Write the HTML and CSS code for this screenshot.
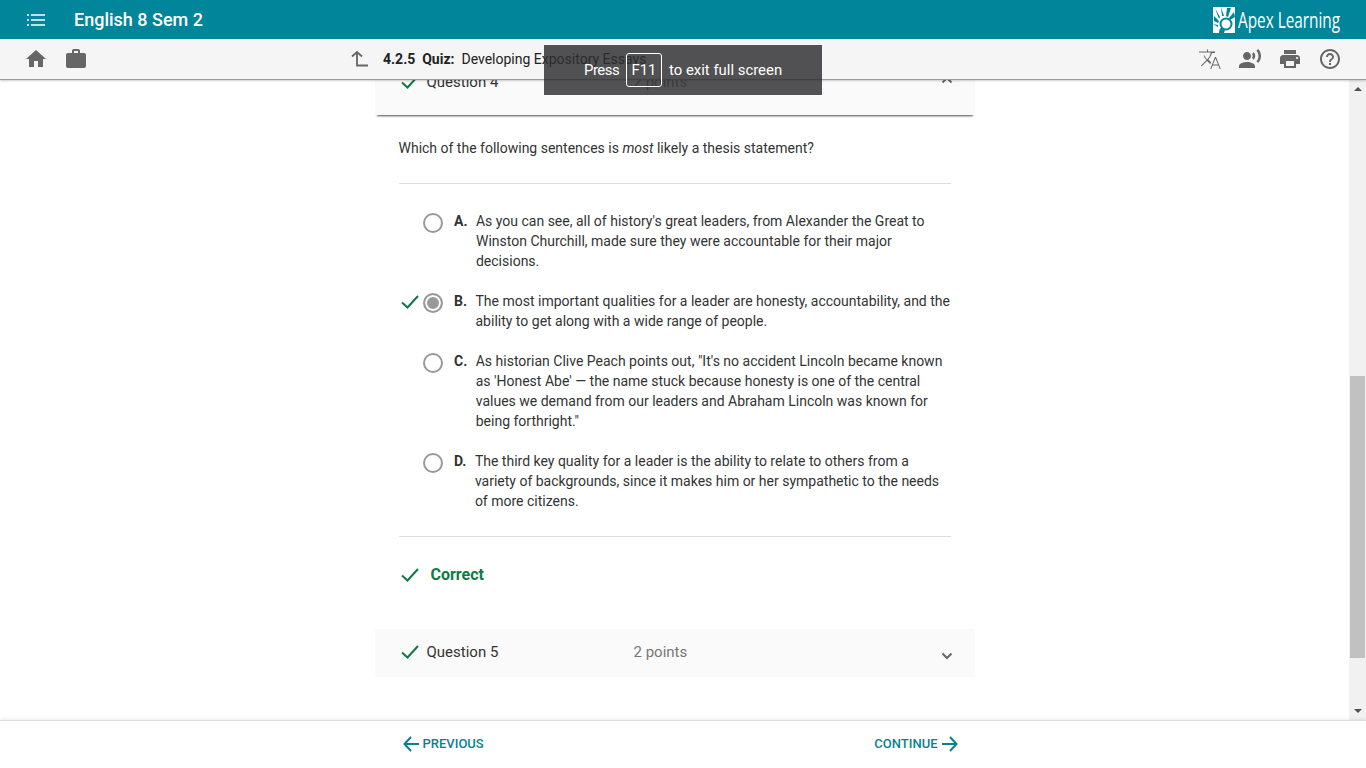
FILE: index.html
```html
<!DOCTYPE html>
<html lang="en">
<head>
<meta charset="utf-8">
<title>English 8 Sem 2</title>
<link rel="stylesheet" href="styles.css">
</head>
<body>
<div class="app">
  <header class="topbar">
    <svg class="menu-icon" viewBox="0 0 20 14" width="20" height="14"><path d="M1 2h2M5 2h14M1 7h2M5 7h14M1 12h2M5 12h14" stroke="#fff" stroke-width="1.700" fill="none"/></svg>
    <h1 class="course">English 8 Sem 2</h1>
    <div class="logo">
      <svg class="logo-mark" viewBox="0 0 22 26" width="22" height="26">
        <rect width="22" height="26" fill="#fff"/>
        <path d="M2 1l5 9-1 2zM8 0l3 9h-2zM14 1l-1 8 2 1 3-9zM21 5l-5 6 1 2 5-3zM1 9l5 5-1 2-4-2zM0 17l5 1v2z" fill="#00859b"/>
        <circle cx="13" cy="17" r="5.500" fill="none" stroke="#00859b" stroke-width="2"/>
        <path d="M6 26c0-3 1-5 3-6l3 3-1 3z" fill="#00859b"/>
      </svg>
      <span class="logo-text">Apex Learning</span>
    </div>
  </header>

  <nav class="toolbar">
    <div class="tool-left">
      <svg class="icon" viewBox="0 0 24 24"><path d="M10 20v-6h4v6h5v-8h3L12 3 2 12h3v8z"/></svg>
      <svg class="icon" viewBox="0 0 24 24"><path d="M20 6h-4V4c0-1.110-.89-2-2-2h-4c-1.110 0-2 .89-2 2v2H4c-1.110 0-1.990.89-1.990 2L2 19c0 1.110.89 2 2 2h16c1.110 0 2-.89 2-2V8c0-1.110-.89-2-2-2zm-6 0h-4V4h4v2z"/></svg>
    </div>
    <div class="crumb">
      <svg class="up-icon" viewBox="0 0 18 16" width="18" height="16"><path d="M1 5.500L6 1l5 4.500M6 1.500V14.500h11" fill="none" stroke="#666" stroke-width="1.800"/></svg>
      <b class="crumb-num">4.2.5</b>
      <b class="crumb-kind">Quiz:</b>
      <span>Developing Expository Essays</span>
    </div>
    <div class="tool-right">
      <svg class="icon" viewBox="0 0 24 24"><path d="M12.870 15.070l-2.540-2.510.03-.03c1.740-1.940 2.980-4.170 3.710-6.530H17V4.500h-7V2.500H9v2H1v1h11.900C12.200 8.500 11 10.600 9 12.400 8 11.300 7.100 10 6.500 8.500h-1c.7 1.700 1.800 3.300 3 4.600l-5.500 5.400.7.700L9 13.900l3.400 3.400.47-2.230zM18 10h-1L12.200 22h1.100l1.300-3.500h5.800l1.300 3.500h1.100L18 10zm-3 7.500l2.500-6 2.500 6h-5z"/></svg>
      <svg class="icon" viewBox="0 0 24 24"><path d="M9 13c2.210 0 4-1.790 4-4s-1.790-4-4-4-4 1.790-4 4 1.790 4 4 4zm0 2c-2.670 0-8 1.340-8 4v2h16v-2c0-2.660-5.330-4-8-4zm6.760-9.640l-1.680 1.690c.84 1.180.84 2.710 0 3.890l1.680 1.690c2.020-2.020 2.020-5.070 0-7.270zM20.070 2l-1.630 1.630c2.770 3.020 2.770 7.560 0 10.740L20.070 16c3.900-3.890 3.910-9.950 0-14z"/></svg>
      <svg class="icon" viewBox="0 0 24 24"><path d="M19 8H5c-1.660 0-3 1.340-3 3v6h4v4h12v-4h4v-6c0-1.660-1.340-3-3-3zm-3 11H8v-5h8v5zm3-7c-.55 0-1-.45-1-1s.45-1 1-1 1 .45 1 1-.45 1-1 1zm-1-9H6v4h12V3z"/></svg>
      <svg class="icon" viewBox="0 0 24 24"><path d="M11 18h2v-2h-2v2zm1-16C6.480 2 2 6.480 2 12s4.480 10 10 10 10-4.480 10-10S17.520 2 12 2zm0 18c-4.410 0-8-3.590-8-8s3.590-8 8-8 8 3.590 8 8-3.590 8-8 8zm0-14c-2.210 0-4 1.790-4 4h2c0-1.100.9-2 2-2s2 .9 2 2c0 2-3 1.750-3 5h2c0-2.250 3-2.500 3-5 0-2.210-1.790-4-4-4z"/></svg>
    </div>
  </nav>

  <div class="middle">
    <main class="scroller">
      <section class="quiz">
        <div class="q-head q-open">
          <svg class="check" viewBox="0 0 18 14" width="18" height="14"><path d="M1 7.500l5.500 5L17 1" /></svg>
          <span class="q-name">Question 4</span>
          <span class="q-points">2 points</span>
          <svg class="chev" viewBox="0 0 12 8" width="12" height="8"><path d="M1.500 6.500l4.500-4.500 4.500 4.500"/></svg>
        </div>
        <div class="q-body">
          <p class="prompt">Which of the following sentences is <em>most</em> likely a thesis statement?</p>
          <div class="options">
            <div class="option">
              <span class="radio"></span><b class="letter">A.</b>
              <span class="opt-text">As you can see, all of history's great leaders, from Alexander the Great to Winston Churchill, made sure they were accountable for their major decisions.</span>
            </div>
            <div class="option">
              <svg class="check check-pick" viewBox="0 0 18 14" width="18" height="14"><path d="M1 7.500l5.500 5L17 1"/></svg>
              <span class="radio radio-on"></span><b class="letter">B.</b>
              <span class="opt-text">The most important qualities for a leader are honesty, accountability, and the ability to get along with a wide range of people.</span>
            </div>
            <div class="option">
              <span class="radio"></span><b class="letter">C.</b>
              <span class="opt-text">As historian Clive Peach points out, "It's no accident Lincoln became known as 'Honest Abe' — the name stuck because honesty is one of the central values we demand from our leaders and Abraham Lincoln was known for being forthright."</span>
            </div>
            <div class="option">
              <span class="radio"></span><b class="letter">D.</b>
              <span class="opt-text">The third key quality for a leader is the ability to relate to others from a variety of backgrounds, since it makes him or her sympathetic to the needs of more citizens.</span>
            </div>
          </div>
          <div class="result">
            <svg class="check" viewBox="0 0 18 14" width="18" height="14"><path d="M1 7.500l5.500 5L17 1"/></svg>
            <strong>Correct</strong>
          </div>
        </div>
        <div class="q-head">
          <svg class="check" viewBox="0 0 18 14" width="18" height="14"><path d="M1 7.500l5.500 5L17 1"/></svg>
          <span class="q-name">Question 5</span>
          <span class="q-points">2 points</span>
          <svg class="chev" viewBox="0 0 12 8" width="12" height="8"><path d="M1.500 1.500l4.500 4.500 4.500-4.500"/></svg>
        </div>
      </section>
    </main>
    <div class="scrollbar">
      <span class="arrow arrow-up"></span>
      <span class="thumb"></span>
      <span class="arrow arrow-down"></span>
    </div>
  </div>

  <footer class="footer">
    <div class="footer-inner">
      <a class="nav-link">
        <svg viewBox="0 0 18 16" width="18" height="16"><path d="M8 1L1.500 8 8 15M2 8h14"/></svg>
        <span>PREVIOUS</span>
      </a>
      <a class="nav-link">
        <span>CONTINUE</span>
        <svg viewBox="0 0 18 16" width="18" height="16"><path d="M10 1l6.500 7-6.500 7M16 8H2"/></svg>
      </a>
    </div>
  </footer>

  <div class="fs-toast">
    <span class="press">Press</span><span class="key">F11</span><span>to exit full screen</span>
  </div>
</div>
</body>
</html>
```

FILE: styles.css
```css
* { box-sizing: border-box; }
html, body { margin: 0; height: 100%; overflow: hidden; }
body { font-family: Roboto, "Liberation Sans", sans-serif; color: #333; background: #fff; }

.app { position: relative; display: flex; flex-direction: column; height: 768px; }

.topbar { flex: 0 0 39px; display: flex; align-items: center; padding: 0 24px 0 26px; background: #00859b; color: #fff; }
.menu-icon { flex: none; }
.course { margin: 0 0 0 28px; font-size: 18px; font-weight: 500; letter-spacing: 0; }
.logo { margin-left: auto; display: flex; align-items: center; gap: 3px; }
.logo-mark { display: block; }
.logo-text { font-family: "Open Sans", sans-serif; font-size: 21px; width: 104px; white-space: nowrap; transform: scaleX(.73); transform-origin: left center; }

.toolbar { position: relative; z-index: 2; flex: 0 0 41px; display: grid; grid-template-columns: 327px 1fr auto; align-items: center; padding: 0 24px; background: #f5f5f5; border-bottom: 1px solid #999; box-shadow: 0 1px 2px rgba(0,0,0,.2); }
.tool-left, .tool-right { display: flex; gap: 16px; }
.icon { width: 24px; height: 24px; fill: #666; display: block; }
.crumb { display: flex; align-items: center; font-size: 14px; color: #222; white-space: nowrap; }
.up-icon { margin-right: 14px; }
.crumb-num { margin-right: 7px; }
.crumb-kind { margin-right: 7px; }

.middle { flex: 1; min-height: 0; display: flex; }
.scroller { flex: 1; min-width: 0; overflow: hidden; }
.quiz { width: 600px; margin: -21px auto 0; }

.q-head { position: relative; display: flex; height: 48px; align-items: center; padding: 0 0 2px 26px; background: #fafafa; font-size: 15px; }
.q-open { height: 56px; padding-bottom: 10px; box-shadow: 0 3px 2px -2px rgba(0,0,0,.7); }
.q-name { margin-left: 8px; width: 207px; color: #333; }
.q-points { color: #777; }
.chev { position: absolute; right: 22px; top: 23px; fill: none; stroke: #666; stroke-width: 2; }
.q-open .chev { top: 17px; }

.check { flex: none; fill: none; stroke: #0f7a45; stroke-width: 2; }

.q-body { padding: 0 24px; font-size: 14px; line-height: 20px; color: #333; }
.prompt { margin: 0; padding: 23px 0 25px; border-bottom: 1px solid #ddd; }
.prompt em { font-style: italic; }

.options { display: flex; flex-direction: column; gap: 20px; padding: 27px 0 25px; border-bottom: 1px solid #ddd; }
.option { position: relative; display: flex; padding-left: 24px; }
.radio { flex: none; width: 20px; height: 20px; margin-top: 2px; border: 2px solid #999; border-radius: 50%; background: #fff; }
.radio-on { background: #999; box-shadow: inset 0 0 0 2px #fff; }
.letter { flex: none; margin: 0 8.5px 0 11.5px; }
.opt-text { flex: 1; }
.check-pick { position: absolute; left: 2px; top: 4px; }

.result { display: flex; align-items: center; gap: 12px; height: 76px; margin-bottom: 16px; padding: 0 0 0 2px; font-size: 16px; color: #0f7a45; }

.scrollbar { flex: 0 0 17px; display: flex; flex-direction: column; align-items: center; background: #f1f1f1; }
.arrow { flex: none; width: 0; height: 0; border-left: 4px solid transparent; border-right: 4px solid transparent; }
.arrow-up { margin-top: 7px; border-bottom: 4px solid #505050; }
.arrow-down { margin-top: auto; margin-bottom: 7px; border-top: 4px solid #505050; }
.thumb { width: 15px; height: 282px; margin-top: 285px; background: #c1c1c1; }

.footer { flex: 0 0 48px; background: #fff; border-top: 1px solid #ddd; box-shadow: 0 -1px 3px rgba(0,0,0,.08); padding-right: 17px; position: relative; }
.footer-inner { width: 600px; height: 100%; margin: 0 auto; display: flex; align-items: center; justify-content: space-between; padding: 0 17px 2px 28px; }
.nav-link { display: flex; align-items: center; gap: 2px; font-size: 13px; font-weight: 500; color: #0b7f92; }
.nav-link svg { fill: none; stroke: #0b7f92; stroke-width: 2; }

.fs-toast { position: absolute; z-index: 5; left: 544px; top: 45px; width: 278px; height: 50px; display: flex; align-items: center; padding-left: 40px; gap: 7px; background: rgba(45,45,48,.82); color: #fff; font-size: 14.9px; }
.press { width: 35px; letter-spacing: -.5px; }
.key { display: flex; align-items: center; justify-content: center; width: 36px; height: 34px; border: 1px solid #fff; border-radius: 3px; }
```
